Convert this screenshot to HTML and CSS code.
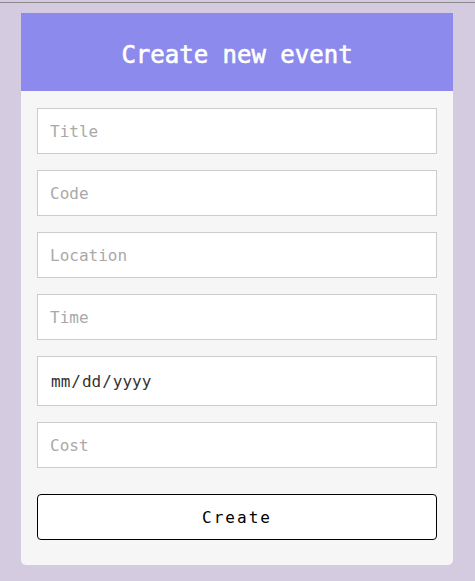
FILE: index.html
```html
<!DOCTYPE html>
<html lang="en">

<head>
    <meta charset="UTF-8">
    <meta name="viewport" content="width=device-width, initial-scale=1.0">
    <title>Create new event</title>
    <link rel="stylesheet" href="styles.css">
</head>

<body>
    <div class="event-card">
        <h1 class="event-title">Create new event</h1>
        <form class="event-form">
            <input type="text" placeholder="Title">
            <input type="text" placeholder="Code">
            <input type="text" placeholder="Location">
            <input type="text" placeholder="Time">
            <input type="date" class="date-field">
            <input type="number" placeholder="Cost">
            <button type="button">Create</button>
        </form>
    </div>
</body>

</html>
```

FILE: styles.css
```css
html {
    background-color: #d5cbe0;
}

body {
    margin: 2px 0 0;
    padding: 10px 1px 0 0;
    border-top: 1px solid #8a8a8a;
    font-family: "DejaVu Sans Mono", monospace;
}

.event-card {
    width: 432px;
    margin: 0 auto;
    background-color: #f6f6f6;
    border-radius: 0 0 5px 5px;
    overflow: hidden;
}

.event-title {
    margin: 0;
    height: 75px;
    padding-top: 3px;
    line-height: 78px;
    background-color: #8c8aec;
    color: #fff;
    text-align: center;
    font-size: 24px;
    font-weight: normal;
    -webkit-text-stroke: 0.6px #fff;
}

.event-form {
    display: flex;
    flex-direction: column;
    padding: 17px 16px 25px;
}

input,
button {
    box-sizing: border-box;
    width: 100%;
    height: 46px;
    margin: 0 0 16px;
    font-family: "DejaVu Sans Mono", monospace;
    font-size: 16px;
}

input {
    padding: 0 12px;
    border: 1px solid #cccccc;
    background-color: #fff;
    color: #333;
    outline: none;
}

input::placeholder {
    color: #a9a9a9;
}

.date-field {
    height: 50px;
    color: #333;
}

.date-field::-webkit-calendar-picker-indicator {
    display: none;
}

button {
    margin: 10px 0 0;
    background-color: #fff;
    color: #000;
    border: 1px solid #000;
    border-radius: 4px;
    letter-spacing: 2px;
    cursor: pointer;
}
```
